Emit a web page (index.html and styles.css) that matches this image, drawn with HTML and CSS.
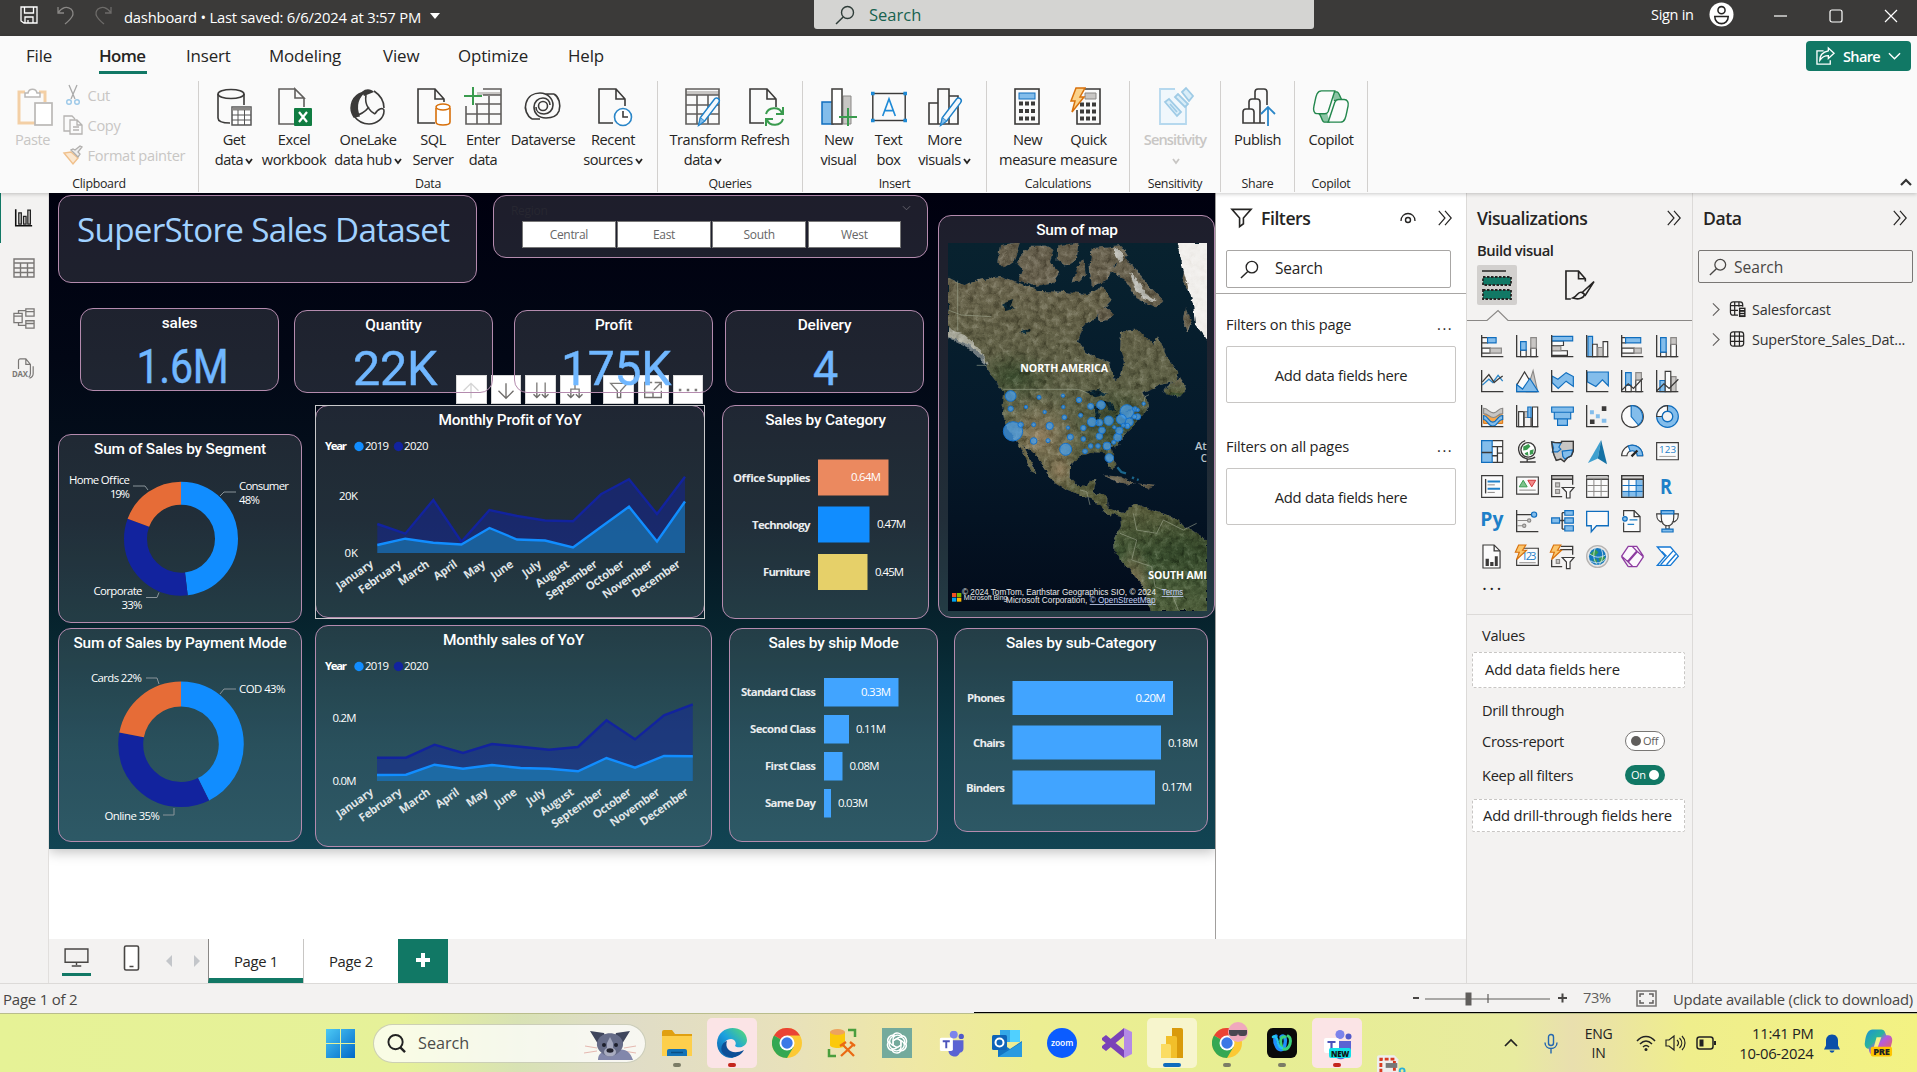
FILE: index.html
```html
<!DOCTYPE html>
<html lang="en">
<head>
<meta charset="utf-8">
<title>dashboard</title>
<link rel="stylesheet" href="styles.css">
</head>
<body>
<svg class="defs" aria-hidden="true">
  <defs>
    <symbol id="chev" viewBox="0 0 8 8"><path d="M1 2l3 4 3-4" fill="none" stroke="currentColor" stroke-width="1.8"/></symbol>
    <symbol id="collapse" viewBox="0 0 18 18"><path d="M2 1l7 8-7 8M9 1l7 8-7 8" fill="none" stroke="currentColor" stroke-width="1.3"/></symbol>
    <symbol id="lens" viewBox="0 0 20 20"><circle cx="12.5" cy="7.5" r="6" fill="none" stroke="currentColor" stroke-width="1.4"/><path d="M8.2 12L1 19" stroke="currentColor" stroke-width="1.5"/></symbol>
    <symbol id="bolt" viewBox="0 0 16 26"><path d="M6 1h9l-5 9h4L2 25l3-11H1z" fill="#fbd28a" stroke="#d8700b" stroke-width="1.5"/></symbol>
    <symbol id="pencil" viewBox="0 0 28 36"><path d="M2 34l2-9L20 4c3-4 8 0 5 4L9 29z" fill="#f4f9fd" stroke="#1e80c8" stroke-width="1.7"/><path d="M2 34l2-9 5 4z" fill="#83bdeb" stroke="#1e80c8"/></symbol>
    <symbol id="chrome" viewBox="0 0 30 30"><circle cx="15" cy="15" r="15" fill="#fcc934"/><path d="M15 15L2 7.500A15 15 0 0 1 28 7.500H15z" fill="#ea4335"/><path d="M2 7.500A15 15 0 0 0 15 30l6.500-11L15 15z" fill="#34a853"/><circle cx="15" cy="15" r="7.500" fill="#fff"/><circle cx="15" cy="15" r="5.700" fill="#3b78e7"/></symbol>
    <symbol id="teams" viewBox="0 0 28 30"><circle cx="16" cy="4.500" r="4.500" fill="#7b83eb"/><circle cx="24.500" cy="6.500" r="3" fill="#5059c9"/><path d="M10 11h17v9c0 4-3 5-4 5-2 4-5 5-8 4-4-1-5-4-5-7z" fill="#5b63d3"/><rect y="8" width="15" height="15" rx="2" fill="#fff"/><path d="M3.500 12h8M7.500 12v8" stroke="#4b53bc" stroke-width="2.200"/></symbol>
    <symbol id="petal" viewBox="0 0 30 30"><path d="M15 10.500l4 2.300v5.500c0 5-6 6-8.500 2.500" fill="none" stroke="#fff" stroke-width="1.300"/><path d="M11 7.500c2-4 9-3 9 2" fill="none" stroke="#fff" stroke-width="1.500"/></symbol>
    <linearGradient id="winG" x1="0" y1="0" x2="1" y2="1"><stop offset="0" stop-color="#4cc9f5"/><stop offset="1" stop-color="#0067c8"/></linearGradient>
    <linearGradient id="edgeG" x1="0" y1="1" x2="1" y2="0"><stop offset="0" stop-color="#0c59a4"/><stop offset=".5" stop-color="#1ba0e0"/><stop offset="1" stop-color="#5be06c"/></linearGradient>
    <linearGradient id="copG" x1="0" y1="0" x2="1" y2="1"><stop offset="0" stop-color="#1a8fd8"/><stop offset=".4" stop-color="#2bb59a"/><stop offset=".55" stop-color="#b45be0"/><stop offset="1" stop-color="#f2643c"/></linearGradient>
  </defs>
</svg>
<div class="app">

  <header class="titlebar">
    <svg class="ic-save" viewBox="0 0 18 18"><path d="M1 1h16v16H4l-3-2zM4.500 1v6h9V1M5 17v-6h8v6M8 14v3" fill="none" stroke="#fff" stroke-width="1.300"/></svg>
    <svg class="ic-undo" viewBox="0 0 18 20"><path d="M1 2v6h6M1 8c4-6 9-7 13-4 5 5 0 10-6 15" fill="none" stroke="#8a8886" stroke-width="1.300"/></svg>
    <svg class="ic-redo" viewBox="0 0 18 20"><path d="M17 2v6h-6M17 8C13 2 8 1 4 4c-5 5 0 10 6 15" fill="none" stroke="#6d6b69" stroke-width="1.300"/></svg>
    <span class="docname">dashboard • Last saved: 6/6/2024 at 3:57 PM</span>
    <svg class="ic-caret" viewBox="0 0 10 6"><path d="M0 0h10L5 6z" fill="#fff"/></svg>
    <div class="topsearch"><svg><use href="#lens"/></svg><span>Search</span></div>
    <span class="signin">Sign in</span>
    <svg class="ic-user" viewBox="0 0 26 26"><circle cx="13" cy="13" r="12.500" fill="#fff"/><circle cx="13" cy="8.500" r="3.700" fill="none" stroke="#252423" stroke-width="1.600"/><path d="M6 15h14c0 10-14 10-14 0z" fill="none" stroke="#252423" stroke-width="1.600"/></svg>
    <svg class="ic-win" viewBox="0 0 14 14"><path d="M0 7h13" stroke="#fff" stroke-width="1.200"/></svg>
    <svg class="ic-win" viewBox="0 0 14 14"><rect x="1" y="1" width="12" height="12" rx="2" fill="none" stroke="#fff" stroke-width="1.200"/></svg>
    <svg class="ic-win" viewBox="0 0 14 14"><path d="M1 1l12 12M13 1L1 13" stroke="#fff" stroke-width="1.200"/></svg>
  </header>

  <section class="ribbon">
    <nav class="tabs">
      <span class="t-file">File</span><span class="t-home">Home</span><span class="t-insert">Insert</span><span class="t-model">Modeling</span><span class="t-view">View</span><span class="t-opt">Optimize</span><span class="t-help">Help</span>
      <button class="share"><svg class="ic-share" viewBox="0 0 20 20"><path d="M8 4H1v14h14v-4" fill="none" stroke="#fff" stroke-width="1.400"/><path d="M13 1l6 5.500-6 5.500V9C8 9 6 11 4 14c0-6 4-9 9-10z" fill="none" stroke="#fff" stroke-width="1.400"/></svg>Share<svg class="ic-sc" viewBox="0 0 14 8"><path d="M1 1l6 6 6-6" fill="none" stroke="#fff" stroke-width="1.500"/></svg></button>
    </nav>
    <div class="groups">
      <div class="group g-clip">
        <div class="row">
          <div class="btn off w-paste"><svg viewBox="0 0 36 38"><path d="M8 4H2v31h16M22 4h6v10" fill="none" stroke="#f3cfa5" stroke-width="3"/><path d="M8 9V5h3c1-5 8-5 9 0h3v4z" fill="#fff" stroke="#bab8b6" stroke-width="1.500"/><rect x="18" y="15" width="17" height="22" fill="#fff" stroke="#bab8b6" stroke-width="1.700"/></svg><span>Paste</span></div>
          <ul class="cliplist">
            <li><svg viewBox="0 0 20 20"><path d="M6 0l6 14M14 0L8 14" stroke="#aaa" stroke-width="1.300"/><circle cx="6" cy="17" r="2.300" fill="none" stroke="#9cc8e8" stroke-width="1.400"/><circle cx="14" cy="17" r="2.300" fill="none" stroke="#9cc8e8" stroke-width="1.400"/></svg>Cut</li>
            <li><svg viewBox="0 0 20 20"><path d="M7 16H1V1h8l3 3M7 5h7l5 5v9H7zM14 5v5h5M10 12h6M10 15h6" fill="none" stroke="#b5b3b1" stroke-width="1.300"/></svg>Copy</li>
            <li><svg viewBox="0 0 20 20"><path d="M1 8l9 11 5-6-7-6z" fill="#fbe7cf" stroke="#f0c08c" stroke-width="1.400"/><path d="M8 5l7 7 2-3-2-2 4-5-2-1-5 4-2-1z" fill="#eee" stroke="#b0aeac" stroke-width="1.300"/></svg>Format painter</li>
          </ul>
        </div>
        <small>Clipboard</small>
      </div>
      <div class="group g-data">
        <div class="row">
          <div class="btn w52"><svg viewBox="0 0 36 38"><ellipse cx="15" cy="6" rx="13" ry="4.500" class="ln"/><path d="M2 6v24c0 4 6 5 12 5M28 6v11" class="ln"/><rect x="16" y="19" width="19" height="18" fill="#fff" stroke="#555" stroke-width="1.500"/><path d="M16 21h19" stroke="#8a8886" stroke-width="3"/><path d="M22 22v15M28.500 22v15M16 27h19M16 32h19" stroke="#555"/></svg><span>Get<br>data<svg class="cv"><use href="#chev"/></svg></span></div>
          <div class="btn w68"><svg viewBox="0 0 36 38"><path d="M19 1H3v35h16M19 1v9h9zM28 10v9" class="ln gr"/><rect x="18" y="20" width="18" height="18" rx="1" fill="#107c41"/><path d="M23 24l8 10M31 24l-8 10" stroke="#fff" stroke-width="2.200"/></svg><span>Excel<br>workbook</span></div>
          <div class="btn w80"><svg viewBox="0 0 36 38"><path d="M9 6a16 16 0 0 0-5 23l5-1C5 17 8 9 16 3z" fill="#3b3a39" stroke="#3b3a39" stroke-width="1.500"/><path d="M12 4c4-4 9-3 12 0L14 8z" fill="#3b3a39"/><path d="M16 7c-2 11 5 17 9 19M24 3c6 4 10 10 10 17M25 26c3-6 9-7 9-3 0 7-7 13-15 13-7 0-12-4-15-8 6-1 11-4 15-9" class="ln"/></svg><span>OneLake<br>data hub<svg class="cv"><use href="#chev"/></svg></span></div>
          <div class="btn w50"><svg viewBox="0 0 36 38"><path d="M20 35H3V1h17l9 10v3M20 1v10h9" class="ln"/><path d="M21 20v14c0 4 14 4 14 0V20" fill="#fff" stroke="#d8700b" stroke-width="1.600"/><ellipse cx="28" cy="19" rx="7" ry="3" fill="#fff" stroke="#d8700b" stroke-width="1.600"/></svg><span>SQL<br>Server</span></div>
          <div class="btn w50"><svg viewBox="0 0 36 38"><path d="M12 4h23v3H12z" fill="#c8c6c4"/><path d="M18 1h18v35H1V18M18 7h18M1 26h35M10 16h26M12 16v20M24 8v28" class="ln gr"/><path d="M8-1v18M-1 8h18" stroke="#3a9b4e" stroke-width="2"/></svg><span>Enter<br>data</span></div>
          <div class="btn w70"><svg viewBox="0 0 36 38"><path d="M29 6c5 3 7 10 5 17-2 5-8 7-13 7-8 0-12-5-12-11 0-5 4-9 9-9 4 0 7 3 7 7M7 31c-5-3-8-10-6-16C3 8 9 5 15 5c8 0 13 6 13 12 0 5-4 9-9 9-5 0-8-3-8-7M29 6h-9M7 31h8" class="ln"/><circle cx="18" cy="18" r="4.500" class="ln"/></svg><span>Dataverse</span></div>
          <div class="btn w70"><svg viewBox="0 0 36 38"><path d="M18 35H4V1h17l9 10v7M21 1v10h9" class="ln"/><circle cx="28" cy="29" r="8.500" fill="#fff" stroke="#2a86c8" stroke-width="1.600"/><path d="M28 23v6h5" class="ln"/></svg><span>Recent<br>sources<svg class="cv"><use href="#chev"/></svg></span></div>
        </div>
        <small>Data</small>
      </div>
      <div class="group g-query">
        <div class="row">
          <div class="btn w70"><svg viewBox="0 0 36 38"><path d="M1 3h33v4H1z" fill="#c8c6c4"/><path d="M1 1h33v35H1zM1 7h33M1 17h33M1 26h33M12 7v29M23 7v29" class="ln gr"/><svg x="10" y="8" width="28" height="31"><use href="#pencil"/></svg></svg><span>Transform<br>data<svg class="cv"><use href="#chev"/></svg></span></div>
          <div class="btn w54"><svg viewBox="0 0 36 38"><path d="M17 35H3V1h17l9 10v8M20 1v10h9" class="ln"/><path d="M19 26c2-7 13-8 16-1M36 19v7h-7M36 31c-2 7-13 8-16 1M19 38v-7h7" fill="none" stroke="#3a9b4e" stroke-width="2"/></svg><span>Refresh</span></div>
        </div>
        <small>Queries</small>
      </div>
      <div class="group g-insert">
        <div class="row">
          <div class="btn w50"><svg viewBox="0 0 36 38"><path d="M22 8h8v28h-8z" fill="#c8c6c4" stroke="#8a8886"/><rect x="1" y="14" width="11" height="22" fill="#83bdeb" stroke="#106ebe" stroke-width="1.500"/><rect x="11" y="1" width="10" height="35" fill="#fff" stroke="#484644" stroke-width="1.600"/><path d="M27 20v18M18 29h18" stroke="#3a9b4e" stroke-width="2"/></svg><span>New<br>visual</span></div>
          <div class="btn w50"><svg viewBox="0 0 40 38"><rect x="2" y="4" width="36" height="30" class="ln"/><path d="M0 2h4v4H0zM36 2h4v4h-4zM0 32h4v4H0zM36 32h4v4h-4z" fill="#1e8ad6"/><path d="M13 29l7-19 7 19M15 23h10" fill="none" stroke="#1e8ad6" stroke-width="1.800"/></svg><span>Text<br>box</span></div>
          <div class="btn w62"><svg viewBox="0 0 36 38"><path d="M2 15h9v21H2zM11 1h11v35H11zM22 8h9v28h-9" class="ln"/><svg x="10" y="8" width="28" height="31"><use href="#pencil"/></svg></svg><span>More<br>visuals<svg class="cv"><use href="#chev"/></svg></span></div>
        </div>
        <small>Insert</small>
      </div>
      <div class="group g-calc">
        <div class="row">
          <div class="btn w61"><svg viewBox="0 0 36 38"><rect x="5" y="1" width="24" height="35" class="ln"/><rect x="9" y="5" width="16" height="6" fill="#83bdeb" stroke="#106ebe"/><path d="M9 15.500h16M9 23h16M9 30.500h16" stroke="#3b3a39" stroke-width="4" stroke-dasharray="4 2"/></svg><span>New<br>measure</span></div>
          <div class="btn w61"><svg viewBox="0 0 36 38"><path d="M14 1h15v35H6V22" class="ln"/><path d="M14 5h11v6H14z" fill="#c8c6c4" stroke="#8a8886"/><path d="M9 16.500h16M9 23.500h16M9 30.500h16" stroke="#3b3a39" stroke-width="4" stroke-dasharray="4 2"/><svg x="-1" y="-1" width="16" height="26"><use href="#bolt"/></svg></svg><span>Quick<br>measure</span></div>
        </div>
        <small>Calculations</small>
      </div>
      <div class="group g-sens">
        <div class="row"><div class="btn off w80"><svg viewBox="0 0 36 38"><path d="M18 1H3v35h26V18" fill="#f0f7fc" stroke="#b5d8ee" stroke-width="1.800"/><path d="M8 14l4-3 12 13-4 4zM13 16l7 8M18 9l10 10 3-3L21 6zM25 4l4-4 7 8-4 5z" fill="#d9edf8" stroke="#9fcbe6" stroke-width="1.800"/></svg><span>Sensitivity<br><svg class="cv"><use href="#chev"/></svg></span></div></div>
        <small>Sensitivity</small>
      </div>
      <div class="group g-share">
        <div class="row"><div class="btn w70"><svg viewBox="0 0 36 38"><path d="M3 35V24q0-3 3-3h5q3 0 3 3v11zM9 21v-7q0-3 3-3h5q3 0 3 3v21h-6M15 11V4q0-3 3-3h6q3 0 3 3v13M20 35h5" class="ln"/><path d="M28 38V19M21 26l7-7 7 7" fill="none" stroke="#2a86c8" stroke-width="1.800"/></svg><span>Publish</span></div></div>
        <small>Share</small>
      </div>
      <div class="group g-cop">
        <div class="row"><div class="btn w70"><svg viewBox="0 0 38 38"><path d="M19 3h6c3 0 4 8 6 9h-9M18 35h-6c-3 0-3-8-6-9h9" fill="#8cc5a5" stroke="#23874d" stroke-width="1.500"/><path d="M9 2h14l-7 22c-1 2-2 2-4 2H4c-3 0-4-4-3-8C3 10 3 2 9 2zM29 35H16l7-21c1-2 2-3 4-3h6c3 0 5 3 4 7-2 8-2 17-8 17z" fill="#fbfbfb" stroke="#23874d" stroke-width="1.500"/></svg><span>Copilot</span></div></div>
        <small>Copilot</small>
      </div>
      <svg class="fold" viewBox="0 0 12 8"><path d="M1 7l5-5 5 5" fill="none" stroke="#333" stroke-width="2.200"/></svg>
    </div>
  </section>

  <main class="work">
    <aside class="rail">
      <svg class="on" viewBox="0 0 22 22"><path d="M2 1v19h19" fill="none" stroke="#111" stroke-width="1.800"/><path d="M5.500 5h3v13h-3zM11 9h3v9h-3zM16 2h3v16h-3z" fill="#c8c6c4" stroke="#222" stroke-width="1.400"/></svg>
      <svg viewBox="0 0 22 22"><path d="M1 2h20v18H1zM1 6h20M1 11h20M1 15.500h20M7.500 6v14M14.500 6v14" fill="none" stroke="#797775" stroke-width="1.400"/></svg>
      <svg viewBox="0 0 24 24"><path d="M1 7h9v10H1zM14 2h9v8h-9zM14 15h9v8h-9zM1 10h9M14 5h9M14 18h9M6 7V4h8M6 17v3h8" fill="none" stroke="#797775" stroke-width="1.400"/></svg>
      <svg viewBox="0 0 24 24"><path d="M6 12V3q0-2 2-2h6l5 6v10q0 3-2 4M14 1v6h5M22 9v8q0 4-4 5" fill="none" stroke="#797775" stroke-width="1.300"/><text x="-1" y="21" font-size="9" font-weight="700" fill="#797775" textLength="17" lengthAdjust="spacingAndGlyphs">DAX</text></svg>
    </aside>

    <section class="center">
      <div class="stage">
        <div class="report">
          <div class="upper">
            <div class="leftcol">
              <div class="line l1">
                <div class="card c-title"><h1>SuperStore Sales Dataset</h1></div>
                <div class="card c-slicer">
                  <div class="shead"><span>Region</span><svg viewBox="0 0 10 6"><path d="M1 1l4 4 4-4" fill="none" stroke="#6a6872"/></svg></div>
                  <div class="chips"><b>Central</b><b>East</b><b>South</b><b>West</b></div>
                </div>
              </div>
              <div class="line l2">
                <div class="card kpi first"><h3>sales</h3><svg viewBox="0 0 199 58"><text x="56.500" y="49.500" textLength="92" lengthAdjust="spacingAndGlyphs">1.6M</text></svg></div>
                <div class="card kpi"><h3>Quantity</h3><svg viewBox="0 0 199 58"><text x="59" y="49.500" textLength="84" lengthAdjust="spacingAndGlyphs">22K</text></svg></div>
                <div class="card kpi k3"><h3>Profit</h3><svg viewBox="0 0 199 58"><text x="47" y="49.500" textLength="110" lengthAdjust="spacingAndGlyphs">175K</text></svg></div>
                <div class="card kpi k4"><h3>Delivery</h3><svg viewBox="0 0 199 58"><text x="88" y="49.500" textLength="25" lengthAdjust="spacingAndGlyphs">4</text></svg></div>
              </div>
              <div class="line l3">
                <div class="card c-seg"><h3>Sum of Sales by Segment</h3>
                  <svg class="plot" viewBox="58 434 244 189">
                    <g fill="none" stroke-width="23" transform="rotate(-90 181 538.700)">
                      <circle cx="181" cy="538.700" r="45.500" pathLength="100" stroke="#118dff" stroke-dasharray="48.100 51.900"/>
                      <circle cx="181" cy="538.700" r="45.500" pathLength="100" stroke="#12239e" stroke-dasharray="32.600 67.400" stroke-dashoffset="-48.100"/>
                      <circle cx="181" cy="538.700" r="45.500" pathLength="100" stroke="#e66c37" stroke-dasharray="19.300 80.700" stroke-dashoffset="-80.700"/>
                    </g>
                    <path d="M133 486h12l3 4M220 496l4-4h12M146 597.500h11l2-5" class="lead"/>
                    <g class="lb"><text x="69" y="484" textLength="61">Home Office</text><text x="110" y="498" textLength="20">19%</text><text x="239" y="490" textLength="50">Consumer</text><text x="239" y="504" textLength="21">48%</text><text x="93.500" y="595" textLength="49">Corporate</text><text x="121.500" y="609" textLength="21">33%</text></g>
                  </svg>
                </div>
                <div class="card c-profit"><h3>Monthly Profit of YoY</h3>
                  <svg class="plot" viewBox="315 405 390 213">
                    <g class="lb"><text x="325" y="450" font-weight="700" textLength="22">Year</text><circle cx="359" cy="446.500" r="4.700" fill="#118dff"/><text x="365" y="450" textLength="24">2019</text><circle cx="398.500" cy="446.500" r="4.700" fill="#12239e"/><text x="404" y="450" textLength="24.500">2020</text><text x="339" y="500" textLength="19">20K</text><text x="344.500" y="557" textLength="13.500">0K</text></g>
                    <path d="M377.300 553V524L405.300 533.700 433.300 500 461.400 541.700 489.500 510 517 516 545 520.500 573 521.300 601 494.300 629 479.300 657 514 685 476.700V553z" fill="#12239e" opacity=".5"/>
                    <path d="M377.300 553V545L405.300 538.700 433.300 542.700 461.400 544.500 489.500 528 517 539.500 545 540.500 573 547.500 601 527 629 506.700 657 541.500 685 501.500V553z" fill="#1b7fb8" opacity=".62"/>
                    <path d="M377.300 524L405.300 533.700 433.300 500 461.400 541.700 489.500 510 517 516 545 520.500 573 521.300 601 494.300 629 479.300 657 514 685 476.700" class="s20"/>
                    <path d="M377.300 545L405.300 538.700 433.300 542.700 461.400 544.500 489.500 528 517 539.500 545 540.500 573 547.500 601 527 629 506.700 657 541.500 685 501.500" class="s19"/>
                    <g class="mo">
                      <text transform="translate(374 566) rotate(-35)">January</text><text transform="translate(402 566) rotate(-35)">February</text><text transform="translate(430 566) rotate(-35)">March</text><text transform="translate(458 566) rotate(-35)">April</text><text transform="translate(486 566) rotate(-35)">May</text><text transform="translate(514 566) rotate(-35)">June</text><text transform="translate(542 566) rotate(-35)">July</text><text transform="translate(570 566) rotate(-35)">August</text><text transform="translate(598 566) rotate(-35)">September</text><text transform="translate(625 566) rotate(-35)">October</text><text transform="translate(653 566) rotate(-35)">November</text><text transform="translate(681 566) rotate(-35)">December</text>
                    </g>
                  </svg>
                </div>
                <div class="card c-cat"><h3>Sales by Category</h3>
                  <svg class="plot" viewBox="722 405 207 214">
                    <path d="M818 459.500h70.500v36H818z" fill="#eb895f"/><path d="M818 506.500h51.500v36H818z" fill="#118dff"/><path d="M818 554h49.500v36H818z" fill="#e6d069"/>
                    <g class="lb bd"><text x="733" y="482" textLength="77.500">Office Supplies</text><text x="752" y="529" textLength="58.500">Technology</text><text x="763" y="576" textLength="47.500">Furniture</text></g>
                    <g class="lb"><text x="851" y="481" textLength="30">0.64M</text><text x="877" y="528" textLength="29">0.47M</text><text x="875" y="576" textLength="29">0.45M</text></g>
                  </svg>
                </div>
                <div class="frame"></div>
                <div class="vtools">
                  <i><svg viewBox="0 0 24 24" class="dim"><path d="M12 22V4M3 13l9-9 9 9"/></svg></i>
                  <i><svg viewBox="0 0 24 24"><path d="M12 4v18M3 13l9 9 9-9"/></svg></i>
                  <i><svg viewBox="0 0 24 24"><path d="M7 3v18M3 17l4 4 4-4M17 3v18M13 17l4 4 4-4"/></svg></i>
                  <i><svg viewBox="0 0 24 24"><path d="M12 2v9M7 21V11h10v10M3 17l4 4 4-4M13 17l4 4 4-4"/></svg></i>
                  <i class="gap"><svg viewBox="0 0 24 24"><path d="M2 4h20l-8 9v8h-4v-8z"/></svg></i>
                  <i><svg viewBox="0 0 24 24"><path d="M11 3H2v18h20v-8M14 3h8v7M22 3l-9 9M2 15h10v6"/></svg></i>
                  <i><svg viewBox="0 0 24 24"><path d="M1 12h3M10.500 12h3M20 12h3" stroke-width="3"/></svg></i>
                </div>
              </div>
            </div>
            <div class="card c-map"><h3>Sum of map</h3>
              <svg class="map" viewBox="84 159 777 1104" preserveAspectRatio="none">
                <defs>
                  <linearGradient id="sea" x1="0" y1="0" x2="0" y2="1"><stop offset="0" stop-color="#08222f"/><stop offset=".5" stop-color="#051a2b"/><stop offset="1" stop-color="#030c1b"/></linearGradient>
                  <linearGradient id="land" x1="0" y1="0" x2="0" y2="1"><stop offset="0" stop-color="#756d58"/><stop offset=".2" stop-color="#66634a"/><stop offset=".5" stop-color="#5d6347"/><stop offset=".72" stop-color="#5a5e3d"/><stop offset=".85" stop-color="#3c5231"/><stop offset="1" stop-color="#4f5f3c"/></linearGradient>
                  <radialGradient id="tan"><stop offset="0" stop-color="#a08868" stop-opacity=".8"/><stop offset="1" stop-color="#8a7a5c" stop-opacity="0"/></radialGradient>
                  <radialGradient id="grn"><stop offset="0" stop-color="#35492b" stop-opacity=".9"/><stop offset="1" stop-color="#3a4a2c" stop-opacity="0"/></radialGradient>
                  <filter id="terrain" x="0" y="0" width="1" height="1" color-interpolation-filters="sRGB"><feTurbulence type="fractalNoise" baseFrequency=".05" numOctaves="4" seed="6" result="n"/><feColorMatrix in="n" values=".8 0 0 0 .08  .8 0 0 0 .08  .8 0 0 0 .08  0 0 0 0 1" result="m"/><feBlend in="m" in2="SourceGraphic" mode="soft-light" result="b"/><feDisplacementMap in="b" in2="n" scale="16" xChannelSelector="R" yChannelSelector="G" result="d"/><feDisplacementMap in="SourceAlpha" in2="n" scale="16" xChannelSelector="R" yChannelSelector="G" result="a"/><feComposite in="d" in2="a" operator="in"/></filter>
                  <clipPath id="landclip"><path d="M84 262L130 285 185 268 240 258 300 280 360 303 430 305 500 315 545 292 575 330 530 380 490 405 474 455 500 490 570 520 585 567 602 558 612 515 600 480 603 425 650 418 672 440 700 462 715 440 740 500 775 545 770 575 720 585 670 610 690 650 655 690 630 715 605 752 575 775 588 830 575 838 550 790 510 786 475 800 453 825 452 865 475 888 500 890 510 868 532 868 520 905 562 920 562 955 610 968 650 942 700 962 745 975 800 1010 861 1050V1263H692L672 1192 620 1130 583 1085 583 1050 603 1008 600 980 560 970 520 930 480 915 430 895 392 870 382 845 350 800 310 765 332 810 350 850 335 845 300 775 255 700 245 645 250 605 215 560 190 500 150 465 84 440z"/></clipPath>
                </defs>
                <rect x="84" y="159" width="777" height="1104" fill="url(#sea)"/>
                <g filter="url(#terrain)">
                  <g fill="url(#land)">
                    <rect x="84" y="159" width="777" height="1104" clip-path="url(#landclip)"/>
                    <path d="M240 165l60-8-20 60-30 20-18-18zM300 200l30-30 50 0 20 10-10 40 30 30-20 30-50 10-60-20 20-30-20-20zM415 165l60-6-4 50-30 20-28-20zM470 230l20-25 8 50-20 20-20 0zM515 175l90-10 20 30-40 30-20 45-50 20-6-60zM590 195l45 25 50 65 45 45-20 25-60-30-40-60-40-20 20-20zM530 360l30-8 20 20-10 18-30 4zM800 200l14 40-10 60-18-30zM795 350l20 50-10 30-16-40zM545 855l60 5 40 20-30 4zM650 880l60 8-30 8z" fill="#6a6350"/>
                    <path d="M730 600l50-35 20 30-20 25-40-10z"/>
                  </g>
                  <g clip-path="url(#landclip)"><ellipse cx="360" cy="740" rx="130" ry="130" fill="url(#tan)"/><ellipse cx="420" cy="840" rx="60" ry="70" fill="url(#tan)"/><ellipse cx="280" cy="560" rx="130" ry="80" fill="url(#grn)"/><ellipse cx="590" cy="700" rx="130" ry="110" fill="url(#grn)"/><ellipse cx="780" cy="1080" rx="140" ry="90" fill="url(#grn)"/><ellipse cx="640" cy="1180" rx="60" ry="120" fill="url(#tan)"/></g>
                  <path d="M84 415l50 20 45 40 25 50-10-5-50-45-60-30z" fill="#d8dad4" opacity=".6"/>
                  <path d="M580 170l30 20-10 30-15-30zM630 250l20 15 30 50 30 20-20 2-40-30z" fill="#dfe2df" opacity=".7"/>
                  <path d="M770 159h100v300l-45-55-6-60-25-90z" fill="#f1efec"/>
                  <path d="M250 340l30-10-10 20 20 5-35 8zM300 430l30-15-10 15zM495 605l40-8 30 15-40 10zM525 650l12 0 4 45-12 10zM550 630l25 5 10 25-15 5zM580 680l30-15 0 10zM615 665l30-10-10 12z" fill="#08202c"/>
                </g>
                <path d="M113 272v150M250 598h225l30 12M170 526h30M84 360l40 15 90 5M670 650l5-30 12-6M480 900l20 5 10 40M640 970l10 50 60 10 20-40 60 30 40-20M600 1030l50 20-15 60 60 20 10 60 50 20 20 50" fill="none" stroke="#a9b09a" stroke-width="2.500" opacity=".65"/>
                <path d="M592 832l12 14 14 4M636 862l6 3M651 868l5 2" fill="none" stroke="#2a9bd0" stroke-width="7" opacity=".6"/>
                <g fill="#4ba3f2" fill-opacity=".72" stroke="#1672cc" stroke-width="3">
                  <circle cx="272" cy="618" r="16"/><circle cx="272" cy="656" r="8"/><circle cx="318" cy="651" r="5"/><circle cx="357" cy="622" r="6"/><circle cx="429" cy="617" r="5"/><circle cx="477" cy="630" r="8"/><circle cx="374" cy="666" r="5"/><circle cx="430" cy="651" r="5"/><circle cx="433" cy="682" r="7"/><circle cx="482" cy="676" r="6"/><circle cx="512" cy="649" r="9"/><circle cx="543" cy="645" r="13"/><circle cx="279" cy="724" r="29"/><circle cx="302" cy="704" r="8"/><circle cx="341" cy="704" r="6"/><circle cx="389" cy="708" r="11"/><circle cx="341" cy="753" r="10"/><circle cx="384" cy="752" r="6"/><circle cx="444" cy="713" r="5"/><circle cx="451" cy="741" r="9"/><circle cx="490" cy="714" r="8"/><circle cx="516" cy="696" r="14"/><circle cx="538" cy="698" r="10"/><circle cx="566" cy="692" r="14"/><circle cx="437" cy="778" r="18"/><circle cx="490" cy="747" r="7"/><circle cx="495" cy="784" r="7"/><circle cx="512" cy="768" r="7"/><circle cx="534" cy="768" r="7"/><circle cx="561" cy="768" r="12"/><circle cx="538" cy="739" r="10"/><circle cx="546" cy="721" r="10"/><circle cx="568" cy="804" r="13"/><circle cx="593" cy="742" r="12"/><circle cx="598" cy="722" r="11"/><circle cx="581" cy="757" r="6"/><circle cx="583" cy="712" r="5"/><circle cx="621" cy="665" r="21"/><circle cx="604" cy="688" r="15"/><circle cx="628" cy="696" r="12"/><circle cx="622" cy="708" r="8"/><circle cx="610" cy="706" r="6"/><circle cx="645" cy="657" r="7"/><circle cx="653" cy="680" r="9"/><circle cx="643" cy="680" r="7"/><circle cx="653" cy="660" r="5"/><circle cx="671" cy="641" r="5"/>
                </g>
                <g fill="#fff" font-weight="700"><text x="301" y="545" font-size="32" textLength="263" lengthAdjust="spacingAndGlyphs">NORTH AMERICA</text><text x="685" y="1168" font-size="32" textLength="175" lengthAdjust="spacingAndGlyphs">SOUTH AMI</text></g>
                <g fill="#b9c3cc" font-size="34" font-weight="600"><text x="825" y="780" textLength="35" lengthAdjust="spacingAndGlyphs">At</text><text x="842" y="816" textLength="18" lengthAdjust="spacingAndGlyphs">C</text></g>
                <g><path fill="#f25022" d="M96 1209h13v12H96z"/><path fill="#7fba00" d="M111 1209h13v12h-13z"/><path fill="#00a4ef" d="M96 1223h13v12H96z"/><path fill="#ffb900" d="M111 1223h13v12h-13z"/></g>
                <g class="credit">
                  <text x="131" y="1229" class="bing" textLength="131" lengthAdjust="spacingAndGlyphs">Microsoft Bing</text>
                  <text x="126" y="1215" textLength="582" lengthAdjust="spacingAndGlyphs">© 2024 TomTom, Earthstar Geographics SIO, © 2024</text>
                  <text x="725" y="1215" class="lk" textLength="65" lengthAdjust="spacingAndGlyphs">Terms</text>
                  <text x="258" y="1239" textLength="244" lengthAdjust="spacingAndGlyphs">Microsoft Corporation,</text>
                  <text x="509" y="1239" class="lk" textLength="198" lengthAdjust="spacingAndGlyphs">© OpenStreetMap</text>
                </g>
              </svg>
            </div>
          </div>
          <div class="line l4">
            <div class="card c-pay"><h3>Sum of Sales by Payment Mode</h3>
              <svg class="plot" viewBox="58 628 244 214">
                <g fill="none" stroke-width="25" transform="rotate(-90 181 744.300)">
                  <circle cx="181" cy="744.300" r="50.300" pathLength="100" stroke="#118dff" stroke-dasharray="42.600 57.400"/>
                  <circle cx="181" cy="744.300" r="50.300" pathLength="100" stroke="#12239e" stroke-dasharray="35.400 64.600" stroke-dashoffset="-42.600"/>
                  <circle cx="181" cy="744.300" r="50.300" pathLength="100" stroke="#e66c37" stroke-dasharray="22 78" stroke-dashoffset="-78"/>
                </g>
                <path d="M146 678h11l2 6M220 694l4-5h12M163 815h11v-7" class="lead"/>
                <g class="lb"><text x="91" y="682" textLength="51">Cards 22%</text><text x="239" y="693" textLength="46.500">COD 43%</text><text x="104.500" y="820" textLength="55.500">Online 35%</text></g>
              </svg>
            </div>
            <div class="card c-msales"><h3>Monthly sales of YoY</h3>
              <svg class="plot" viewBox="315 625 396 222">
                <g class="lb"><text x="325" y="670" font-weight="700" textLength="22">Year</text><circle cx="359" cy="666.500" r="4.700" fill="#118dff"/><text x="365" y="670" textLength="24">2019</text><circle cx="398.500" cy="666.500" r="4.700" fill="#12239e"/><text x="404" y="670" textLength="24.500">2020</text><text x="332.500" y="722" textLength="24">0.2M</text><text x="332.500" y="785" textLength="24">0.0M</text></g>
                <path d="M377 781V757.700H406L434.500 744.700 463 753 492 744 520.500 746.700 549 749.700 578 747 606.500 720.300 635 739.300 664 715.300 692.800 704.300V781z" fill="#12239e" opacity=".5"/>
                <path d="M377 781V775L406 774.700 434.500 764.700 463 768.700 492 765 520.500 768 549 768.700 578 771.300 606.500 758 635 767.700 664 756 692.800 756.300V781z" fill="#1d84b8" opacity=".65"/>
                <path d="M377 757.700H406L434.500 744.700 463 753 492 744 520.500 746.700 549 749.700 578 747 606.500 720.300 635 739.300 664 715.300 692.800 704.300" class="s20"/>
                <path d="M377 775L406 774.700 434.500 764.700 463 768.700 492 765 520.500 768 549 768.700 578 771.300 606.500 758 635 767.700 664 756 692.800 756.300" class="s19"/>
                <g class="mo">
                  <text transform="translate(374 794) rotate(-35)">January</text><text transform="translate(402.500 794) rotate(-35)">February</text><text transform="translate(431 794) rotate(-35)">March</text><text transform="translate(460 794) rotate(-35)">April</text><text transform="translate(488.500 794) rotate(-35)">May</text><text transform="translate(517.500 794) rotate(-35)">June</text><text transform="translate(546 794) rotate(-35)">July</text><text transform="translate(574.500 794) rotate(-35)">August</text><text transform="translate(603.500 794) rotate(-35)">September</text><text transform="translate(632 794) rotate(-35)">October</text><text transform="translate(660.500 794) rotate(-35)">November</text><text transform="translate(689 794) rotate(-35)">December</text>
                </g>
              </svg>
            </div>
            <div class="card c-ship"><h3>Sales by ship Mode</h3>
              <svg class="plot" viewBox="729 628 209 214">
                <path d="M824 678h74.500v28.500H824zM824 715h25v28.500h-25zM824 752h18.500v28.500H824zM824 789h7v28.500h-7z" fill="#41a4ff"/>
                <g class="lb bd"><text x="741" y="696" textLength="75">Standard Class</text><text x="750" y="733" textLength="66">Second Class</text><text x="765" y="770" textLength="51">First Class</text><text x="765" y="807" textLength="51">Same Day</text></g>
                <g class="lb"><text x="861" y="696" textLength="30">0.33M</text><text x="856" y="733" textLength="30">0.11M</text><text x="849.500" y="770" textLength="30">0.08M</text><text x="838" y="807" textLength="30">0.03M</text></g>
              </svg>
            </div>
            <div class="card c-sub"><h3>Sales by sub-Category</h3>
              <svg class="plot" viewBox="954 628 254 204">
                <path d="M1012.500 681H1173v34h-160.500zM1012.500 725.500h148.500v34h-148.500zM1012.500 770.500h142.500v34h-142.500z" fill="#41a4ff"/>
                <g class="lb bd"><text x="967" y="702" textLength="38">Phones</text><text x="973" y="747" textLength="32">Chairs</text><text x="966" y="792" textLength="39">Binders</text></g>
                <g class="lb"><text x="1135.500" y="702" textLength="30">0.20M</text><text x="1168" y="747" textLength="30">0.18M</text><text x="1162" y="791" textLength="30">0.17M</text></g>
              </svg>
            </div>
          </div>
        </div>
      </div>
    </section>

    <aside class="filters">
      <header><svg class="ic-fun" viewBox="0 0 22 20"><path d="M1 1h20l-8 9v6l-4 3v-9z" fill="none" stroke="#252423" stroke-width="1.700"/></svg><h2>Filters</h2><svg class="ic-eye" viewBox="0 0 16 12"><path d="M1 9C1-1 15-1 15 9" fill="none" stroke="#252423" stroke-width="1.300"/><circle cx="8" cy="8" r="2.500" fill="none" stroke="#252423" stroke-width="1.400"/></svg><svg class="ic-col"><use href="#collapse"/></svg></header>
      <div class="fsearch"><svg><use href="#lens"/></svg>Search</div>
      <div class="fsec"><div class="flab"><span>Filters on this page</span><em>...</em></div><div class="fbox">Add data fields here</div></div>
      <div class="fsec two"><div class="flab"><span>Filters on all pages</span><em>...</em></div><div class="fbox">Add data fields here</div></div>
    </aside>

    <aside class="viz">
      <header><h2>Visualizations</h2><svg class="ic-col"><use href="#collapse"/></svg></header>
      <h4>Build visual</h4>
      <div class="modes">
        <div class="mode sel"><svg viewBox="0 0 30 30"><path d="M0 1h24" stroke="#252423" stroke-width="1.500"/><path d="M1 7h28v8H1zM1 20h28v9H1z" fill="#117865" stroke="#252423" stroke-width="1.800" stroke-dasharray="2.500 1.500"/></svg></div>
        <div class="mode"><svg viewBox="0 0 31 31"><path d="M6 30H1V1h13l7 8v3M14 1v8h7" fill="none" stroke="#252423" stroke-width="1.700"/><path d="M30 12L18 23l3 3zM17 23c-4-1-4 4-9 6 6 2 12 0 12-4z" fill="none" stroke="#252423" stroke-width="1.600"/></svg></div>
      </div>
      <svg class="caretline" viewBox="0 0 225 12"><path d="M0 10.500h20l11-10 10 10h184" fill="none" stroke="#8a8886" stroke-width="1.200"/></svg>
      <div class="vgrid">
        <svg viewBox="0 0 70 70"><path d="M2 8h18v16H2zM2 40h26v15H2z" class="w"/><path d="M20 8h26v16H20z" class="b"/><path d="M28 40h34v15H28z" class="g"/><path d="M2 0v66h66" class="k"/></svg>
        <svg viewBox="0 0 70 70"><path d="M14 46h17v20H14zM45 40h17v26H45z" class="w"/><path d="M14 20h17v26H14z" class="b"/><path d="M45 8h17v32H45z" class="g"/><path d="M2 0v66h66" class="k"/></svg>
        <svg viewBox="0 0 70 70"><path d="M2 18h36v14H2zM2 48h48v14H2z" class="w"/><path d="M2 4h64v14H2z" class="b"/><path d="M2 34h28v14H2z" class="g"/><path d="M2 0v66h66" class="k"/></svg>
        <svg viewBox="0 0 70 70"><path d="M6 4h14v62H6z" class="b"/><path d="M20 28h14v38H20zM52 20h14v46H52z" class="w"/><path d="M36 38h15v28H36z" class="g"/><path d="M2 0v66h66" class="k"/></svg>
        <svg viewBox="0 0 70 70"><path d="M2 8h12v16H2zM2 40h38v15H2z" class="w"/><path d="M14 8h46v16H14z" class="b"/><path d="M40 40h22v15H40z" class="g"/><path d="M2 0v66h66" class="k"/></svg>
        <svg viewBox="0 0 70 70"><path d="M14 52h17v14H14zM45 28h17v38H45z" class="w"/><path d="M14 8h17v44H14z" class="b"/><path d="M45 8h17v20H45z" class="g"/><path d="M2 0v66h66" class="k"/></svg>

        <svg viewBox="0 0 70 70"><path d="M4 46l20-18 12 10 16-22 14 18" fill="none" stroke="#2a86c8" stroke-width="4"/><path d="M4 36l20-22 16 24 12-10 14-10" class="k"/><path d="M2 0v66h66" class="k"/></svg>
        <svg viewBox="0 0 70 70"><path d="M32 66L52 2l14 64z" class="g"/><path d="M2 66V46L26 6l36 60z" class="w"/><path d="M2 66V44l18 14L42 26l26 40z" class="b"/></svg>
        <svg viewBox="0 0 70 70"><path d="M3 18l18 10L46 8l22 12v30L46 34 22 56 3 38z" class="b"/><path d="M2 0v66h66" class="k"/></svg>
        <svg viewBox="0 0 70 70"><path d="M4 6h64v42L50 30 30 50 4 36z" class="b"/><path d="M2 0v66h66" class="k"/></svg>
        <svg viewBox="0 0 70 70"><path d="M14 46h17v20H14zM45 30h17v36H45z" class="w"/><path d="M14 8h17v38H14z" class="b"/><path d="M45 8h17v22H45z" class="g"/><path d="M2 0v66h66M2 62l20-20 16 14 28-30" class="k"/></svg>
        <svg viewBox="0 0 70 70"><path d="M12 32h16v34H12z" class="b"/><path d="M46 20h15v46H46z" class="g"/><path d="M28 4h17v62H28z" class="w"/><path d="M2 0v66h66M2 64l22-22 16 14 28-28" class="k"/></svg>

        <svg viewBox="0 0 70 70"><path d="M8 30h58v26H8z" fill="#f7a64a" stroke="#d8700b" stroke-width="3"/><path d="M8 10c14 0 16 14 30 14s12-14 28-14v16c-16 0-14 12-28 12S22 26 8 26z" class="g"/><path d="M8 32c14 0 14 20 28 20s12-20 30-20v12c-16 0-14 20-30 20S20 44 8 44z" class="b"/><path d="M2 0v66h66" class="k"/></svg>
        <svg viewBox="0 0 70 70"><path d="M8 20h16v46H8zM50 6h16v60H50z" class="w"/><path d="M24 20h14v18H24z" class="g"/><path d="M36 6h10v32H36z" class="b"/><path d="M2 0v66h66M24 20v46M46 38v28" class="k"/></svg>
        <svg viewBox="0 0 70 70"><path d="M2 6h66v16H2zM10 22h50v20H10zM20 42h30v20H20z" class="b"/></svg>
        <svg viewBox="0 0 70 70"><path d="M48 4h14v14H48zM12 44h14v14H12z" fill="#3b3a39"/><path d="M12 16h12v12H12zM30 28h12v12H30zM48 42h14v12H48z" fill="#83bdeb"/><path d="M2 0v66h66" class="k"/></svg>
        <svg viewBox="0 0 70 70"><circle cx="35" cy="35" r="33" class="w"/><path d="M31 2v33l22 26A33 33 0 0 0 31 2z" class="b"/></svg>
        <svg viewBox="0 0 70 70"><circle cx="35" cy="35" r="33" class="b"/><path d="M35 2A33 33 0 0 0 2 35h17a16 16 0 0 1 16-16z" class="w"/><circle cx="35" cy="35" r="16" fill="#f3f2f1" stroke="#106ebe" stroke-width="4"/></svg>

        <svg viewBox="0 0 70 70"><path d="M2 2h64v66H2z" class="w"/><path d="M2 2h32v66H2z" class="b"/><path d="M2 38h32M34 20h32M50 20v48M34 48h16M50 40h16" class="k"/></svg>
        <svg viewBox="0 0 70 70"><circle cx="37" cy="30" r="22" fill="#fff" stroke="#3b3a39" stroke-width="4"/><path d="M22 20l16-8 6 8-10 10-12 2zM42 32l12-4-2 14-10 4zM26 40l10-4 2 12-8-2z" fill="#3a9b4e"/><path d="M28 2c-30 10-26 50 10 56 8 0 16-2 20-6M34 58v8M12 67h48" class="k"/></svg>
        <svg viewBox="0 0 70 70"><path d="M2 6l10 2h20V4h36v30l-6 14-12 6-10 12-10-8-14 4-6-14-4-12z" class="g"/><path d="M2 6l28 4-6 12 6 6-10 8H4l4-12zM34 34l32-4-4 18-20 10-6-8z" class="b"/><path d="M2 6l10 2h20V4h36v30l-6 14-12 6-10 12-10-8-14 4-6-14-4-12z" class="k"/></svg>
        <svg viewBox="0 0 70 70"><path d="M46 0L6 70l30-14z" fill="#3fa0cf"/><path d="M46 0l18 74-28-18z" fill="#1572a5"/></svg>
        <svg viewBox="0 0 70 70"><path d="M2 48a32 32 0 0 1 64 0H50a16 16 0 0 0-32 0z" class="w"/><path d="M22 18a32 32 0 0 1 44 30H50a16 16 0 0 0-22-14z" class="b"/><path d="M32 50l18-18" stroke="#252423" stroke-width="7"/></svg>
        <svg viewBox="0 0 70 70"><path d="M2 8h66v52H2z" class="w"/><text x="9" y="39" font-size="30" fill="#1e80c8" textLength="52">123</text><path d="M10 50h50" stroke="#a19f9d" stroke-width="3"/></svg>

        <svg viewBox="0 0 70 70"><path d="M2 2h64v66H2z" class="w"/><path d="M14 12v44" class="k"/><path d="M20 20h38M20 42h38" stroke="#1e80c8" stroke-width="6"/><path d="M20 30h22M20 53h22" stroke="#8a8886" stroke-width="3"/></svg>
        <svg viewBox="0 0 70 70"><path d="M2 6h66v52H2z" class="w"/><path d="M10 36l12-20 12 20z" fill="#7fc28c" stroke="#3a9b4e" stroke-width="3"/><path d="M36 16h24L48 36z" fill="#f28a8a" stroke="#d13438" stroke-width="3"/><path d="M10 46h50" stroke="#8a8886" stroke-width="3"/></svg>
        <svg viewBox="0 0 70 70"><path d="M2 2h64v12H2z" fill="#c8c6c4"/><path d="M34 66H2V2h64v28M2 13h64" class="k"/><path d="M14 24h12v12H14zM14 44h12v12H14z" class="g"/><path d="M34 38h36L58 52v18H47V52z" class="w"/></svg>
        <svg viewBox="0 0 70 70"><path d="M2 2h66v66H2z" class="w"/><path d="M2 6h66v6H2z" fill="#c8c6c4"/><path d="M2 13h66" class="k"/><path d="M24 14v52M46 14v52M4 32h62M4 50h62" stroke="#8a8886" stroke-width="3"/></svg>
        <svg viewBox="0 0 70 70"><path d="M2 2h66v66H2z" class="w"/><path d="M46 14h20v52H4V50h42z" fill="#83bdeb"/><path d="M24 14v52M46 14v52M4 32h62M4 50h62" stroke="#106ebe" stroke-width="3"/><path d="M2 7h66v6H2z" fill="#c8c6c4"/><path d="M2 2h66v66H2zM2 13h66" class="k"/></svg>
        <svg viewBox="0 0 70 70"><text x="12" y="58" font-size="64" font-weight="700" fill="#1e80c8" textLength="36" lengthAdjust="spacingAndGlyphs">R</text></svg>

        <svg viewBox="0 0 70 70"><text x="-2" y="50" font-size="60" font-weight="700" fill="#1e80c8" textLength="70" lengthAdjust="spacingAndGlyphs">Py</text></svg>
        <svg viewBox="0 0 70 70"><path d="M2 0v66h66M4 14h42" class="k"/><path d="M4 32h30M4 48h16" stroke="#8a8886" stroke-width="3"/><circle cx="55" cy="14" r="8" class="b"/><circle cx="40" cy="32" r="5" class="g"/><circle cx="25" cy="48" r="5" class="g"/></svg>
        <svg viewBox="0 0 70 70"><path d="M24 32h20M34 8v50M34 8h10M34 58h10" class="k"/><path d="M2 24h24v16H2zM42 2h26v14H42zM42 24h26v16H42zM42 48h26v16H42z" class="b"/></svg>
        <svg viewBox="0 0 70 70"><path d="M2 4h66v44H32L16 66V48H2z" fill="#fafafa" stroke="#106ebe" stroke-width="4"/></svg>
        <svg viewBox="0 0 70 70"><path d="M8 18V2h32l18 18v46H8V38" class="w"/><path d="M40 2v18h18" class="k"/><circle cx="12" cy="27" r="7" class="b"/><path d="M26 30h24M20 44h20" stroke="#1e80c8" stroke-width="4"/></svg>
        <svg viewBox="0 0 70 70"><path d="M18 12H2c0 18 6 24 20 26M52 12h16c0 18-6 24-20 26M16 2h38v20c0 20-10 26-19 26S16 42 16 22zM30 48v10h10V48" class="w"/><path d="M16 2h38v10H16zM18 58h34v9H18z" class="b"/></svg>

        <svg viewBox="0 0 70 70"><path d="M6 0h34l18 18v52H6z" class="w"/><path d="M40 0v18h18" class="k"/><path d="M14 42h10v22H14zM28 52h10v12H28zM42 34h9v30h-9z" fill="#3b3a39"/></svg>
        <svg viewBox="0 0 70 70"><path d="M24 10h44v52H2V42" class="w"/><text x="16" y="47" font-size="34" fill="#1e80c8" textLength="46">123</text><path d="M10 54h50" stroke="#8a8886" stroke-width="3"/><path class="zap" d="M8 0h22L20 16h12L2 44l8-22H-2z"/></svg>
        <svg viewBox="0 0 70 70"><path d="M30 4h36v26M2 44v22h32M28 14h38" class="k"/><path d="M16 44h10v12H16z" class="g"/><path d="M34 38h36L58 52v20H47V52z" class="w"/><path class="zap" d="M8 0h22L20 16h12L2 44l8-22H-2z"/></svg>
        <svg viewBox="0 0 70 70"><circle cx="35" cy="35" r="33" fill="#e8e8e8" stroke="#b5b3b1" stroke-width="4"/><circle cx="35" cy="35" r="26" fill="#1478bd"/><path d="M12 28l16-14 10 8-12 14zM38 40l16-8 4 10-14 14zM20 46l12-4 2 14z" fill="#3a9b4e"/><path d="M10 26c18 14 34 14 50 4M14 48c14 10 32 8 46-6M28 10c-8 20-4 38 6 50M46 12c8 16 6 32-6 48" fill="none" stroke="#d5e6f0" stroke-width="2.500"/></svg>
        <svg viewBox="0 0 70 70"><path d="M22 4h12l14 14L20 50 2 34zM48 66H36L22 52 50 20l18 16zM34 4h14l20 30M22 66h14M2 36l20 30" fill="#fbf7fc" stroke="#8d3aa0" stroke-width="4"/></svg>
        <svg viewBox="0 0 70 70"><path d="M4 6h40l24 28-24 28H4l24-28z" fill="#fff" stroke="#1478d4" stroke-width="4"/><path d="M52 18L14 60M60 28L32 60M32 34L18 20" stroke="#1478d4" stroke-width="4"/></svg>
      </div>
      <div class="more">...</div>
      <div class="wells">
        <p class="lab">Values</p>
        <div class="well tall">Add data fields here</div>
        <p class="lab semi">Drill through</p>
        <div class="tog"><span>Cross-report</span><i class="off">Off</i></div>
        <div class="tog"><span>Keep all filters</span><i class="onn">On</i></div>
        <div class="well">Add drill-through fields here</div>
      </div>
    </aside>

    <aside class="data">
      <header><h2>Data</h2><svg class="ic-col"><use href="#collapse"/></svg></header>
      <div class="dsearch"><svg><use href="#lens"/></svg>Search</div>
      <div class="drow"><svg class="ar" viewBox="0 0 9 16"><path d="M1 1l7 7-7 7" fill="none" stroke="#605e5c" stroke-width="1.200"/></svg><svg class="tb" viewBox="0 0 18 18"><path d="M9 15H4q-3 0-3-3V4q0-3 3-3h7q3 0 3 3v2M1 5h13M1 10h8M5.500 1v14M10 1v5" fill="none" stroke="#252423" stroke-width="1.300"/><path d="M10 7h7v10h-7z" fill="#252423"/><path d="M11.500 9h4M11.500 12h4M11.500 14.500h4" stroke="#fff"/></svg>Salesforcast</div>
      <div class="drow"><svg class="ar" viewBox="0 0 9 16"><path d="M1 1l7 7-7 7" fill="none" stroke="#605e5c" stroke-width="1.200"/></svg><svg class="tb" viewBox="0 0 18 18"><path d="M4 1h8q3 0 3 3v9q0 3-3 3H4q-3 0-3-3V4q0-3 3-3zM1 5.500h14M1 11h14M5.500 1v15M10.500 1v15" fill="none" stroke="#252423" stroke-width="1.300"/></svg>SuperStore_Sales_Dat...</div>
    </aside>
  </main>

  <div class="pagebar">
    <div class="views"><svg class="desk" viewBox="0 0 26 20"><path d="M1 1h24v14H1zM13 15v3M8 19h10" fill="none" stroke="#484644" stroke-width="1.500"/></svg></div>
    <svg class="phone" viewBox="0 0 16 26"><rect x="1" y="1" width="14" height="24" rx="1.500" fill="#fff" stroke="#484644" stroke-width="1.600"/><path d="M6 21.500h4" stroke="#484644" stroke-width="1.500"/></svg>
    <svg class="pv" viewBox="0 0 6 12"><path d="M6 0v12L0 6z" fill="#c3c6ca"/></svg>
    <svg class="nx" viewBox="0 0 6 12"><path d="M0 0v12l6-6z" fill="#c3c6ca"/></svg>
    <div class="ptab cur">Page 1</div><div class="ptab">Page 2</div>
    <div class="padd"><svg viewBox="0 0 14 14"><path d="M7 0v14M0 7h14" stroke="#fff" stroke-width="4"/></svg></div>
    <div class="pr p1"></div><div class="pr p2"></div>
  </div>

  <footer class="status">
    <span class="pg">Page 1 of 2</span>
    <svg class="zoomer" viewBox="0 0 152 18"><path d="M0 8h6M145 8h9M149.500 3.500v9" stroke="#484644" stroke-width="2"/><path d="M12 9h125M75 4v9" stroke="#605e5c" stroke-width="1.200"/><path d="M52.500 2.500h6v13h-6z" fill="#605e5c"/></svg>
    <span class="pct">73%</span>
    <svg class="fit" viewBox="0 0 21 17"><path d="M1 1h19v15H1z" fill="none" stroke="#797775" stroke-width="1.600"/><path d="M4 7V4h4M13 4h4v3M17 10v3h-4M8 13H4v-3" fill="none" stroke="#605e5c" stroke-width="1.500"/></svg>
    <span class="upd">Update available (click to download)</span>
  </footer>

  <div class="taskbar">
    <svg class="win" viewBox="0 0 29 29"><path d="M0 0h14v14H0zM15 0h14v14H15zM0 15h14v14H0zM15 15h14v14H15z" fill="url(#winG)"/></svg>
    <div class="tsearch"><svg class="tl" viewBox="0 0 20 20"><circle cx="9" cy="8.500" r="7.500" fill="none" stroke="#222" stroke-width="2"/><path d="M14 14l5 5" stroke="#222" stroke-width="2.500"/></svg><span>Search</span>
      <svg class="devil" viewBox="0 0 52 32"><path d="M1 17l12 2M0 24l13-2M52 17l-12 2M52 24l-13-2" stroke="#e5b8b0"/><path d="M30 22c10-4 16 0 19 9H14c0-6 4-9 10-9z" fill="#8287ab"/><path d="M6 2l14 2 2 6-8 5zM46 2L32 4l-2 6 8 5z" fill="#3f455c"/><path d="M14 11c4-9 20-9 24 0 4 8-4 15-12 17-8-2-16-9-12-17z" fill="#666c88"/><path d="M23 14l3-6 3 6v8h-6z" fill="#a3a7bd"/><circle cx="20" cy="16" r="2" fill="#1d1f2c"/><circle cx="32" cy="16" r="2" fill="#1d1f2c"/><ellipse cx="26" cy="23" rx="6" ry="4.500" fill="#a9acc0"/><ellipse cx="26" cy="21.500" rx="3.500" ry="2.200" fill="#22232f"/></svg></div>
    <div class="slots">
      <div class="slot run"><svg viewBox="0 0 30 30"><path d="M0 4q0-2 2-2h8l3 4h17v6H0z" fill="#e0a011"/><path d="M0 8h30v20H0z" fill="#fdcf4c"/><path d="M5 28v-5q0-2 2-2h16q2 0 2 2v5z" fill="#1473b8"/><path d="M9 24.500h12" stroke="#0a4f86" stroke-width="1.500"/></svg></div>
      <div class="slot hot red"><svg viewBox="0 0 30 30"><path d="M0 15C1-5 29-4 30 12c0 7-9 9-12 6 2-3 0-7-4-7-5 0-8 4-7 9 1 6 7 8 10 10C7 31 0 24 0 15z" fill="url(#edgeG)"/><path d="M10 13c-3 8 5 15 17 9-5 9-17 10-22 2-2-5 1-10 5-11z" fill="#0d4f96"/></svg></div>
      <div class="slot"><svg viewBox="0 0 30 30"><use href="#chrome"/></svg></div>
      <div class="slot"><svg viewBox="0 0 30 30"><path d="M3 4v13c0 4 15 4 15 0V4z" fill="#fbc90c"/><ellipse cx="10.500" cy="4" rx="7.500" ry="3" fill="#eda35e"/><path d="M21 2h7v7M2 21v7h7" fill="none" stroke="#4a9e3d" stroke-width="2.500"/><path d="M15 16l12 12M26 17L14 28M23 14l5 4M13 18l6-4" stroke="#ea6a13" stroke-width="2.300"/></svg></div>
      <div class="slot"><svg viewBox="0 0 30 30"><path d="M0 0h30v30H0z" fill="#74aa9c"/><use href="#petal"/><use href="#petal" transform="rotate(60 15 15)"/><use href="#petal" transform="rotate(120 15 15)"/><use href="#petal" transform="rotate(180 15 15)"/><use href="#petal" transform="rotate(240 15 15)"/><use href="#petal" transform="rotate(300 15 15)"/></svg></div>
      <div class="slot"><svg viewBox="-1 -3 30 34"><use href="#teams" width="28" height="30"/></svg></div>
      <div class="slot"><svg viewBox="0 0 30 30"><path d="M8 2h20v12H8z" fill="#35a8e8"/><path d="M18 2h10v12H18z" fill="#50d0ff"/><path d="M6 13l12 8 12-8v16H6z" fill="#1275c4"/><path d="M6 29l24-15v15z" fill="#2a9be0"/><rect y="7" width="15" height="15" rx="1.500" fill="#0f64b8"/><circle cx="7.500" cy="14.500" r="4" fill="none" stroke="#fff" stroke-width="2"/></svg></div>
      <div class="slot"><svg viewBox="0 0 30 30"><circle cx="15" cy="15" r="15" fill="#0b5cff"/><text x="4" y="18" font-size="8.500" font-weight="600" fill="#fff" textLength="22">zoom</text></svg></div>
      <div class="slot"><svg viewBox="0 0 30 30"><path d="M22 0l8 4v22l-8 4z" fill="#b48ae6"/><path d="M22 0v8L4 23l-4-3v-2zM0 10l4-3 18 15v8L0 12z" fill="#7a42b8"/></svg></div>
      <div class="slot pale blue"><svg viewBox="0 0 30 30"><path d="M15 0h9q2 0 2 2v28H15z" fill="#d99a0b"/><path d="M9 8h9q2 0 2 2v20H9z" fill="#f2bf2a"/><path d="M4 16h8q2 0 2 2v12H4z" fill="#fbdc62"/></svg></div>
      <div class="slot run av"><svg class="wide" viewBox="0 0 36 36"><svg x="0" y="6" width="30" height="30"><use href="#chrome"/></svg><circle cx="26" cy="10" r="10" fill="#f0a9bd"/><path d="M17 8h18v3q0 3-3 3h-3q-3 0-3-3 0 3-3 3h-3q-3 0-3-3z" fill="#4a4650"/></svg></div>
      <div class="slot run"><svg viewBox="0 0 30 30"><rect width="30" height="30" rx="6" fill="#0a0a0a"/><g fill="none" stroke-linecap="round"><path d="M14 9c4-3 5 2 4 7-1 8-7 7-9 1-2-4-1-8 0-9" stroke="#1f8fff" stroke-width="3.500"/><path d="M18 9c-4-1-5 3-4 7 1 8 7 6 9 0 1-4 0-7-2-8" stroke="#3ad179" stroke-width="3"/><path d="M6 9c2-2 4 0 5 6 1 4 2 5 4 5" stroke="#23c4f0" stroke-width="2.500"/></g></svg></div>
      <div class="slot hot red"><svg viewBox="0 0 30 30"><svg x="1" y="2" width="26" height="26"><use href="#teams"/></svg><rect x="7" y="20" width="22" height="10" rx="2" fill="#12dfe8"/><text x="9" y="28.500" font-size="9" font-weight="800" fill="#111" textLength="18" lengthAdjust="spacingAndGlyphs">NEW</text></svg></div>
      <div class="slot snip"><svg viewBox="0 0 30 18"><path d="M0 2q0-2 2-2h16l4 4v14H0z" fill="#eee"/><path d="M4 18V4h14v14" fill="none" stroke="#d83b20" stroke-width="3" stroke-dasharray="4 2"/><path d="M9 8h12v5H9z" fill="#777"/><circle cx="26" cy="16" r="2.500" fill="none" stroke="#2ab0d8" stroke-width="2"/></svg></div>
    </div>
    <svg class="tup" viewBox="0 0 14 8"><path d="M1 7l6-6 6 6" fill="none" stroke="#222" stroke-width="1.700"/></svg>
    <svg class="mic" viewBox="0 0 14 20"><rect x="4.500" y="1" width="5" height="11" rx="2.500" fill="none" stroke="#2467b0" stroke-width="1.400"/><path d="M1 9c0 8 12 8 12 0M7 15v5" fill="none" stroke="#2467b0" stroke-width="1.400"/></svg>
    <div class="lang">ENG<br>IN</div>
    <svg class="wifi" viewBox="0 0 20 16"><path d="M1 6c5-6 13-6 18 0M4 9c4-4 8-4 12 0M7 12c2-2 4-2 6 0" fill="none" stroke="#222" stroke-width="1.500"/><circle cx="10" cy="14.500" r="1.500" fill="#222"/></svg>
    <svg class="snd" viewBox="0 0 20 16"><path d="M1 5h3l5-4v14l-5-4H1zM12 5c2 2 2 4 0 6M14.500 3c3 3 3 7 0 10M17 1c4 4 4 10 0 14" fill="none" stroke="#222" stroke-width="1.200"/></svg>
    <svg class="bat" viewBox="0 0 20 14"><rect x="1" y="1" width="16" height="12" rx="2.500" fill="none" stroke="#222" stroke-width="1.500"/><path d="M3.500 3.500h4v7h-4z" fill="#222"/><path d="M19 5v4" stroke="#222" stroke-width="2"/></svg>
    <div class="clock">11:41 PM<br>10-06-2024</div>
    <svg class="bell" viewBox="0 0 16 18"><path d="M8 0c4 0 6 3 6 6v5l2 4H0l2-4V6c0-3 2-6 6-6zM5.500 16h5c-1 3-4 3-5 0z" fill="#0a4fa8"/></svg>
    <svg class="cop" viewBox="0 0 30 28"><path d="M9 0h9c3 0 4 3 5 6h2c3 0 5 3 4 7-2 8-3 13-8 13H9c-3 0-4-4-4-6-3 0-5-3-4-7C2 5 4 0 9 0z" fill="url(#copG)"/><path d="M13 8h5l-4 11h-4z" fill="#f5f08a"/><rect x="7" y="18" width="22" height="10" rx="2" fill="#ffc400"/><text x="9.500" y="26.500" font-size="9" font-weight="800" fill="#222" textLength="17" lengthAdjust="spacingAndGlyphs">PRE</text></svg>
  </div>
</div>
</body>
</html>
```
FILE: styles.css
```css
* { box-sizing: border-box; }
body { margin: 0; font-family: "Open Sans", "Noto Sans", sans-serif; font-size: 15px; letter-spacing: -0.02em; color: #252423; }
h1, h2, h3, h4, p, ul { margin: 0; padding: 0; font-weight: 400; }
em, i { font-style: normal; }
svg { display: block; flex: none; overflow: visible; }
.defs { position: absolute; width: 0; height: 0; }
.app { width: 1917px; height: 1072px; overflow: hidden; display: flex; flex-direction: column; background: #f3f2f1; }

/* title bar */
.titlebar { height: 36px; flex: none; background: #3b3a39; color: #fff; display: flex; align-items: center; padding-left: 20px; }
.ic-save { width: 18px; height: 18px; margin-top: -6px; }
.ic-undo { width: 18px; height: 20px; margin: -6px 0 0 19px; }
.ic-redo { width: 18px; height: 20px; margin: -6px 0 0 19px; }
.docname { width: 298px; margin: -2px 0 0 12px; white-space: nowrap; font-size: 14.8px; letter-spacing: -0.014em; }
.ic-caret { width: 10px; height: 6px; margin: -4px 0 0 8px; }
.topsearch { width: 500px; height: 29px; margin: -7px 0 0 374px; background: #d4d4d2; border-radius: 0 0 3px 3px; display: flex; align-items: center; padding-left: 21px; color: #17624f; font-size: 16.5px; letter-spacing: 0; }
.topsearch svg { width: 20px; height: 20px; margin-right: 14px; color: #2f3d39; }
.signin { width: 46px; margin: -7px 0 0 337px; font-size: 14.5px; letter-spacing: -0.02em; white-space: nowrap; }
.ic-user { width: 25px; height: 25px; margin: -7px 41px 0 12px; }
.ic-win { width: 14px; height: 14px; margin: -4px 41px 0 -1px; }
.ic-win + .ic-win { margin-left: 0; }
.ic-win:last-child { margin-right: 0; }

/* ribbon */
.ribbon { height: 157px; flex: none; background: #fafafa; box-shadow: 0 1px 4px rgba(0,0,0,.22); position: relative; z-index: 5; }
.tabs { height: 45px; display: flex; padding: 5px 6px 0 26px; font-size: 16.9px; line-height: 29px; letter-spacing: -0.008em; }
.tabs span { height: 33px; white-space: nowrap; }
.t-file { width: 73px; }
.t-home { width: 48px; margin-right: 39px; font-weight: 600; border-bottom: 3px solid #117865; letter-spacing: -0.035em; }
.t-insert { width: 83px; }
.t-model { width: 114px; }
.t-view { width: 75px; }
.t-opt { width: 110px; }
.t-help { width: 38px; }
.share { width: 105px; height: 30px; margin: 0 0 0 auto; padding: 0 10px; border: 0; border-radius: 4px; background: #117865; color: #fff; font: 600 14.6px "Open Sans", sans-serif; letter-spacing: -0.05em; display: flex; align-items: center; justify-content: space-between; }
.ic-share { width: 19px; height: 19px; }
.ic-sc { width: 13px; height: 8px; }
.groups { display: flex; height: 111px; font-size: 14.6px; }
.group { border-right: 1px solid #d2d0ce; display: flex; flex-direction: column; align-items: center; flex: none; }
.group .row { display: flex; height: 94px; flex: none; }
.group small { font-size: 12.4px; line-height: 14px; padding-top: 2px; }
.g-clip { width: 199px; } .g-data { width: 459px; } .g-query { width: 145px; } .g-insert { width: 184px; }
.g-calc { width: 143px; } .g-sens { width: 91px; } .g-share { width: 74px; } .g-cop { width: 73px; }
.btn { display: flex; flex-direction: column; align-items: center; padding-top: 7px; text-align: center; line-height: 20px; letter-spacing: -0.03em; white-space: nowrap; }
.btn > svg { width: 36px; height: 38px; margin-bottom: 3px; }
.btn.off { color: #c8c6c4; }
.btn.off.w80 { font-weight: 600; letter-spacing: -0.06em; }
.cv { display: inline-block; width: 8px; height: 8px; margin-left: 2px; }
.ln { fill: none; stroke: #3b3a39; stroke-width: 1.6; }
.ln.gr { stroke: #605e5c; }
.w-paste { width: 52px; margin-left: -5px; }
.w-paste > svg { margin-left: 5px; }
.w50 { width: 50px; } .w52 { width: 52px; } .w54 { width: 54px; } .w61 { width: 61px; } .w62 { width: 62px; }
.w68 { width: 68px; } .w70 { width: 70px; } .w80 { width: 80px; }
.cliplist { list-style: none; color: #c8c6c4; width: 128px; padding-left: 4px; margin-top: -1px; }
.cliplist li { display: flex; align-items: center; height: 30px; gap: 5px; white-space: nowrap; }
.cliplist svg { width: 20px; height: 20px; }
.fold { width: 12px; height: 8px; margin: 97px 5px 0 auto; }

/* working area */
.work { height: 746px; flex: none; display: flex; }
.rail { width: 49px; flex: none; border-right: 1px solid #e1dfdd; display: flex; flex-direction: column; align-items: center; gap: 28.5px; padding-top: 15px; background: linear-gradient(#117865, #117865) 0 0 / 1px 50px no-repeat #f3f2f1; }
.rail svg { width: 22px; height: 22px; margin-right: 1px; }
.rail .on { width: 19px; height: 20px; }
.center { width: 1167px; flex: none; background: #fff; border-right: 1px solid #a19f9d; overflow: hidden; }
.report { width: 1166px; height: 656px; background: linear-gradient(#00000f 0, #020715 25%, #04131f 50%, #072630 68%, #0d3947 84%, #124453 100%); box-shadow: 0 3px 12px rgba(0,0,0,.25); color: #fff; }
.upper { display: flex; height: 432px; }
.leftcol { width: 880px; flex: none; }
.line { display: flex; align-items: flex-start; padding-left: 9px; position: relative; }
.card { border: 1px solid #b48bae; border-radius: 13px; background: rgba(255,255,255,.118); flex: none; overflow: hidden; }
.card h3 { font: 500 15.4px/18px Roboto, sans-serif; letter-spacing: -0.012em; text-align: center; padding-top: 5px; height: 24px; white-space: nowrap; }
.l1 { height: 113px; padding-top: 2px; }
.c-title { width: 419px; height: 88px; padding: 12px 0 0 18px; }
.c-title h1 { font-size: 33.2px; line-height: 44px; color: #a0d1ff; letter-spacing: -0.021em; white-space: nowrap; }
.c-slicer { width: 435px; height: 63px; margin-left: 16px; }
.shead { display: flex; justify-content: space-between; align-items: center; padding: 4px 16px 0 17px; height: 25px; font-size: 12px; color: #272731; }
.shead svg { width: 9px; height: 6px; margin-bottom: 6px; }
.chips { display: flex; gap: 1.5px; padding-left: 28px; }
.chips b { width: 93.7px; height: 27px; background: #fff; border: 1px solid #777; color: #666; font-size: 12px; font-weight: 400; text-align: center; line-height: 25px; }
.l2 { height: 87px; padding: 4px 0 0 31px; z-index: 2; align-items: flex-end; }
.kpi { width: 199px; height: 83px; margin-left: 21px; overflow: visible; }
.kpi.first { margin: 0 -6px 2px 0; }
.kpi.k4 { margin-left: 12px; }
.kpi svg { width: 199px; height: 58px; margin-left: -1px; }
.kpi svg text { font: 400 49px Roboto, sans-serif; fill: #70b7ff; stroke: #70b7ff; stroke-width: .5; }
.l3 { height: 230px; padding-top: 12px; }
.plot { display: block; margin: -25px -1px -1px; }
.c-seg { width: 244px; height: 189px; margin-top: 29px; } .c-seg .plot { width: 244px; height: 189px; }
.c-profit { width: 390px; height: 213px; margin-left: 13px; } .c-profit .plot { width: 390px; height: 213px; }
.c-cat { width: 207px; height: 214px; margin-left: 17px; } .c-cat .plot { width: 207px; height: 214px; }
.frame { position: absolute; left: 266px; top: 12px; width: 390px; height: 214px; border: 1px solid #c9c9cb; }
.vtools { position: absolute; left: 407px; top: -18px; display: flex; gap: 3.8px; }
.vtools i { width: 30.8px; height: 29px; background: #fff; border: 1px solid #d5d5d5; display: flex; justify-content: center; align-items: center; }
.vtools .gap { margin-left: 9px; }
.vtools svg { width: 20px; height: 22px; fill: none; stroke: #6e6c6a; stroke-width: 1.6; }
.vtools .dim { stroke: #cfcfcf; }
.lead { fill: none; stroke: #8a949a; stroke-width: 1; }
.lb text { font-size: 11.4px; fill: #fff; letter-spacing: 0; }
.lb.bd text { font-weight: 700; fill: #e9ecee; }
.s19, .s20 { fill: none; stroke-width: 2.4; }
.s19 { stroke: #118dff; } .s20 { stroke: #12239e; }
.mo text { font-size: 11.3px; font-weight: 700; fill: #dfe3e6; text-anchor: end; letter-spacing: -0.02em; }
.c-map { width: 277px; height: 403px; margin: 22px 0 0 9px; padding-left: 9px; }
.c-map h3 { width: 258px; height: 27px; }
.map { width: 259px; height: 368px; overflow: hidden; }
.credit { fill: #e8e8e8; font-family: "Liberation Sans", sans-serif; font-size: 25px; letter-spacing: 0; }
.credit .bing { font-size: 21px; }
.credit .lk { fill: #c5d0f5; text-decoration: underline; }
.l4 { height: 224px; }
.c-pay { width: 244px; height: 214px; margin-top: 3px; } .c-pay .plot { width: 244px; height: 214px; }
.c-msales { width: 397px; height: 222px; margin-left: 13px; } .c-msales .plot { width: 396px; height: 222px; }
.c-ship { width: 209px; height: 214px; margin: 3px 0 0 17px; } .c-ship .plot { width: 209px; height: 214px; }
.c-sub { width: 254px; height: 204px; margin: 3px 0 0 16px; } .c-sub .plot { width: 254px; height: 204px; }

/* side panes */
.filters { width: 250px; flex: none; background: #fff; font-size: 14.6px; }
.filters header, .viz header, .data header { height: 57px; display: flex; align-items: center; padding-bottom: 8px; }
h2 { font-size: 17.6px; font-weight: 600; letter-spacing: -0.025em; }
.ic-col { width: 16px; height: 18px; }
.filters header { padding-left: 15px; }
.ic-fun { width: 21px; height: 20px; margin-right: 9px; }
.filters h2 { width: 56px; }
.ic-eye { width: 16px; height: 12px; margin-left: 83px; margin-right: 21px; }
.fsearch { width: 225px; height: 38px; margin: 0 0 5px 10px; border: 1px solid #a8a6a4; border-radius: 2px; display: flex; align-items: center; padding-left: 13px; font-size: 15.4px; letter-spacing: -0.01em; line-height: 34px; }
.fsearch svg { width: 19px; height: 19px; margin-right: 16px; }
.fsec { border-top: 1px solid #a8a6a4; padding: 20px 10px 0; height: 122px; }
.fsec.two { border: 0; height: 120px; padding-top: 21px; }
.flab { display: flex; justify-content: space-between; line-height: 20px; height: 32px; padding-right: 3px; letter-spacing: -0.01em; }
.flab em { letter-spacing: .1em; }
.fbox { height: 57px; border: 1px solid #c8c6c4; border-radius: 2px; text-align: center; line-height: 56px; font-size: 14.8px; }
.viz { width: 226px; flex: none; border-left: 1px solid #dcdad8; font-size: 14.6px; }
.viz header { height: 50px; padding: 0 10px 0 10px; justify-content: space-between; }
.viz h4 { font-size: 14.8px; font-weight: 600; padding-left: 10px; line-height: 20px; margin-top: -3px; letter-spacing: -0.03em; }
.modes { display: flex; gap: 43px; padding: 5px 0 0 10px; }
.mode { width: 40px; height: 40px; display: flex; align-items: center; justify-content: center; border-radius: 2px; }
.mode.sel { background: #d2d0ce; }
.mode svg { width: 30px; height: 30px; }
.caretline { width: 225px; height: 12px; margin-top: 5px; }
.vgrid { display: grid; grid-template-columns: repeat(6, 23px); grid-auto-rows: 23px; gap: 12px; padding: 11px 0 0 14px; margin-top: 2px; }
.vgrid svg { width: 23px; height: 23px; }
.vgrid .k { fill: none; stroke: #3b3a39; stroke-width: 4; }
.vgrid .w { fill: #fbfbfb; stroke: #3b3a39; stroke-width: 3.5; }
.vgrid .b { fill: #83bdeb; stroke: #106ebe; stroke-width: 3.5; }
.vgrid .g { fill: #c8c6c4; stroke: #8a8886; stroke-width: 3.5; }
.vgrid .zap { fill: #fbc56b; stroke: #d8700b; stroke-width: 3.5; }
.more { height: 46px; padding: 5px 0 0 15px; line-height: 20px; font-size: 19px; letter-spacing: .12em; }
.wells { border-top: 1px solid #dcdad8; padding: 10px 7px 0 5px; }
.lab { padding-left: 10px; line-height: 20px; height: 27px; }
.lab.semi { font-weight: 500; margin-top: 12px; height: 24px; }
.well { height: 33px; border: 1px dashed #c8c6c4; background: #fff; padding-left: 10px; line-height: 31px; white-space: nowrap; border-radius: 2px; margin-top: 7px; font-size: 14.8px; letter-spacing: -0.012em; }
.well.tall { height: 36px; line-height: 33px; margin-top: 0; padding-left: 12px; }
.tog { height: 34px; display: flex; justify-content: space-between; align-items: center; padding: 0 20px 0 10px; }
.tog i { width: 40px; height: 20px; border-radius: 10px; font-size: 11px; line-height: 18px; display: flex; align-items: center; }
.tog .off { border: 1px solid #797775; background: #fff; color: #605e5c; padding-left: 5px; gap: 2px; }
.tog .off::before, .tog .onn::after { content: ""; width: 10px; height: 10px; border-radius: 50%; background: #605e5c; }
.tog .onn { background: #117865; color: #fff; padding-left: 6px; gap: 3px; }
.tog .onn::after { background: #fff; }
.data { flex: 1; border-left: 1px solid #dcdad8; font-size: 14.4px; }
.data header { height: 50px; justify-content: space-between; padding: 0 9px 0 10px; }
.dsearch { width: 215px; height: 33px; margin: 7px 0 11px 5px; border: 1px solid #797775; border-radius: 2px; display: flex; align-items: center; padding-left: 10px; font-size: 15.6px; color: #484644; letter-spacing: 0; }
.dsearch svg { width: 18px; height: 18px; margin-right: 7px; }
.drow { height: 30px; display: flex; align-items: center; padding-left: 19px; white-space: nowrap; color: #333; letter-spacing: -0.012em; }
.ar { width: 8px; height: 15px; }
.tb { width: 18px; height: 17px; margin: 0 5px 0 9px; }

/* page tabs and status */
.pagebar { height: 44px; flex: none; display: flex; align-items: flex-start; margin-left: 48px; border-left: 1px solid #e1dfdd; }
.views { width: 29px; height: 37px; margin: 0 0 0 13px; border-bottom: 3px solid #117865; display: flex; justify-content: center; padding-top: 9px; }
.desk { width: 25px; height: 19px; }
.phone { width: 17px; height: 26px; margin: 6px 0 0 32px; }
.pv, .nx { width: 6px; height: 12px; margin: 16px 0 0 26px; }
.nx { margin-left: 22px; margin-right: 8px; }
.ptab { width: 95px; height: 44px; background: #fff; text-align: center; line-height: 45px; font-size: 14.8px; border-left: 1px solid #c8c6c4; }
.ptab.cur { border-bottom: 5px solid #117865; border-left-color: #8a8886; }
.padd { width: 50px; height: 44px; background: #117865; display: flex; align-items: center; justify-content: center; padding-bottom: 3px; }
.padd svg { width: 14px; height: 14px; }
.pr { height: 44px; border-left: 1px solid #dcdad8; }
.pr.p1 { margin-left: auto; width: 226px; }
.pr.p2 { width: 225px; }
.status { height: 30px; flex: none; border-top: 1px solid #dcdad8; display: flex; align-items: center; padding-left: 3px; color: #484644; font-size: 15px; background: linear-gradient(#000, #000) 974px 100% / 943px 1px no-repeat #f3f2f1; }
.pg { width: 1410px; letter-spacing: -0.015em; }
.zoomer { width: 152px; height: 18px; }
.pct { width: 53px; margin: -3px 0 0 18px; font-size: 14.6px; color: #605e5c; letter-spacing: -0.02em; }
.fit { width: 21px; height: 17px; margin: 0 16px 0 0; }
.upd { white-space: nowrap; letter-spacing: -0.014em; font-size: 14.8px; }

/* taskbar */
.taskbar { height: 59px; flex: none; display: flex; align-items: center; padding-left: 326px; border-top: 1px solid #b9bd8c; color: #222; background: linear-gradient(90deg, #e6f296 0, #e6f199 21%, #d8e2b4 27%, #dfdcc8 32%, #e8e1bb 41%, #efe8a4 48%, #ecee92 54%, #e7ee93 66%, #e8eb9f 79%, #e9dfae 82%, #efee8c 88%, #f3f283 100%); }
.win { width: 29px; height: 29px; margin-right: 18px; }
.tsearch { width: 273px; height: 39px; border-radius: 20px; background: rgba(255,255,255,.75); border: 1px solid rgba(150,155,120,.45); display: flex; align-items: center; padding-left: 13px; font-size: 16.2px; letter-spacing: 0; color: #4b4b48; }
.tl { width: 19px; height: 19px; margin-right: 12px; }
.devil { width: 52px; height: 32px; margin: 3px 9px 0 auto; }
.slots { display: flex; margin: -2px 0 0 3.5px; height: 56px; }
.slot { width: 55px; height: 56px; display: flex; flex-direction: column; align-items: center; padding-top: 14px; position: relative; }
.slot svg { width: 30px; height: 30px; }
.slot > svg { position: relative; z-index: 1; }
.slot > svg.wide { width: 36px; height: 36px; margin: -6px -6px 0 0; }
.slot.run::after, .slot.red::after, .slot.blue::after { content: ""; position: relative; z-index: 1; width: 8px; height: 4px; border-radius: 2px; background: #7b7c66; margin-top: 5px; }
.slot.red::after { background: #c4261d; }
.slot.blue::after { background: #0f6cbd; width: 18px; }
.slot.hot::before, .slot.pale::before { content: ""; position: absolute; inset: 4px 2.500px 2px 2.500px; background: #fbe4e6; border-radius: 5px; }
.slot.pale::before { background: #f7f5cd; }
.slot.snip { padding: 41px 2px 0 0; }
.slot.snip > svg { width: 29px; height: 18px; }
.tup { width: 14px; height: 8px; margin-left: 84px; }
.mic { width: 14px; height: 21px; margin-left: 26px; }
.lang { width: 44px; text-align: center; font-size: 14px; line-height: 19.5px; margin: 0 15px 0 19px; }
.wifi { width: 20px; height: 16px; }
.snd { width: 20px; height: 16px; margin-left: 9px; }
.bat { width: 20px; height: 14px; margin-left: 11px; }
.clock { width: 84px; text-align: right; font-size: 14.8px; line-height: 20px; margin-left: 14px; white-space: nowrap; letter-spacing: -0.02em; }
.bell { width: 16px; height: 19px; margin-left: 10px; }
.cop { width: 29px; height: 28px; margin-left: 24px; }
```
